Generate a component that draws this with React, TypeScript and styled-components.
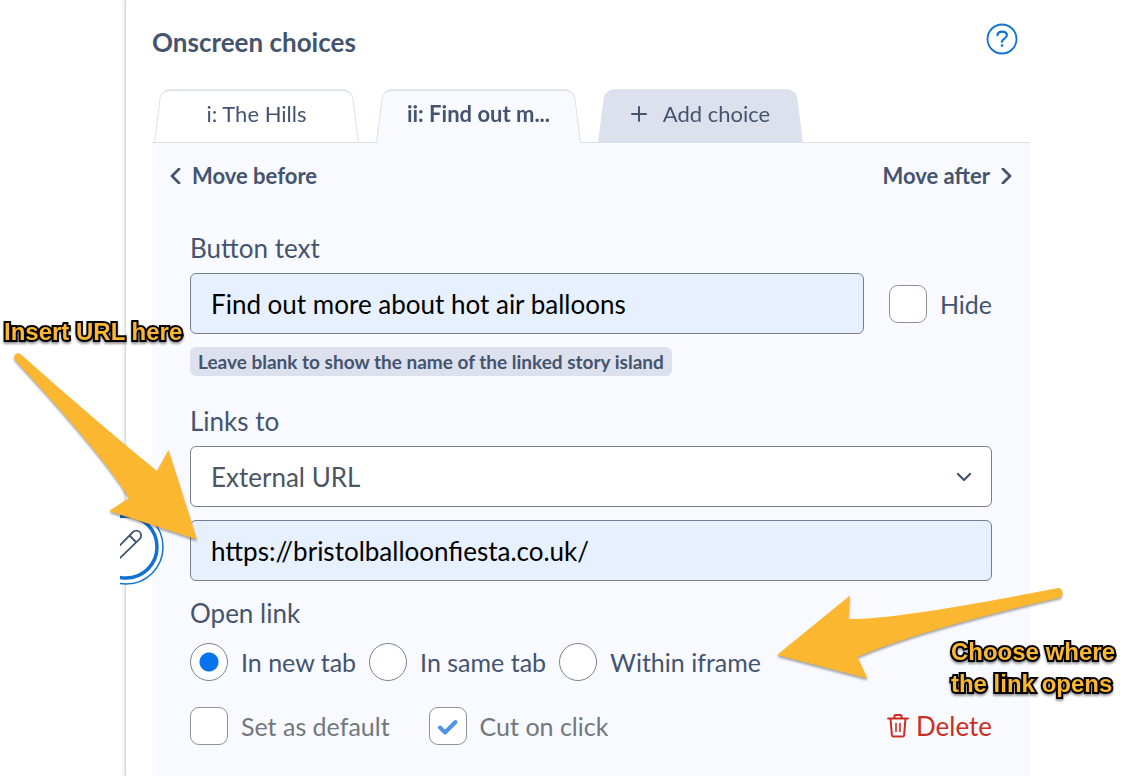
import React, { useState } from "react";
import styled, { createGlobalStyle, css } from "styled-components";

const ink = "#44546f";
const line = "#dcdfe4";
const field = "#e7f0fe";
const surface = "#f8faff";
const tint = "#dce1ed";
const outline = "#75808f";
const blue = "#1272d3";
const amber = "#fcb730";

const GlobalStyle = createGlobalStyle`
  *, *::before, *::after { box-sizing: border-box; }
  body {
    margin: 0;
    background: #fff;
    color: ${ink};
    font-family: Lato, "Liberation Sans", sans-serif;
  }
  button, input, select { font: inherit; color: inherit; margin: 0; }
`;

const Page = styled.div`
  position: relative;
  display: flex;
  min-height: 100vh;
  overflow: hidden;
`;

const Gutter = styled.div`
  flex: 0 0 125px;
`;

const Main = styled.main`
  flex: 1;
  min-width: 0;
  display: flex;
  flex-direction: column;
  padding: 0 96px 0 26px;
  border-left: 1px solid #d8d8d8;
  box-shadow: 0 0 4px rgba(0, 0, 0, 0.2);
  background: #fff;
`;

const Header = styled.header`
  display: flex;
  justify-content: space-between;
  align-items: center;
  height: 88px;
  padding: 0 12px 10px 0;
`;

const Title = styled.h1`
  margin: 6px 0 0;
  font-size: 26px;
  line-height: 32px;
  font-weight: 700;
`;

const plainButton = css`
  border: 0;
  padding: 0;
  background: none;
  cursor: pointer;
`;

const HelpButton = styled.button`
  ${plainButton}
  display: flex;
`;

const Tabs = styled.div`
  position: relative;
  z-index: 1;
  display: flex;
  gap: 17px;
  padding: 0 2px;
`;

const Tab = styled.button<{ $fill: string; $active?: boolean; $edge?: string }>`
  ${plainButton}
  position: relative;
  z-index: 0;
  flex: 0 0 205px;
  display: flex;
  justify-content: center;
  align-items: center;
  gap: 16px;
  height: 55px;
  padding-bottom: 3px;
  font-size: 22px;
  line-height: 32px;
  font-weight: ${(p) => (p.$active ? 700 : 400)};

  &::before {
    content: "";
    position: absolute;
    z-index: -1;
    inset: -3px 0 0;
    background: ${(p) => p.$fill};
    border: 1px solid ${(p) => p.$edge ?? line};
    border-top-width: 2px;
    border-bottom-width: ${(p) => (p.$active ? 0 : 1)}px;
    border-radius: 10px 10px 0 0;
    transform: perspective(100px) rotateX(7deg);
    transform-origin: bottom;
  }
`;

const Panel = styled.section`
  flex: 1;
  margin-top: -1px;
  padding: 0 0 30px;
  border-top: 1px solid ${line};
  background: ${surface};
`;

const MoveRow = styled.div`
  display: flex;
  justify-content: space-between;
  padding: 17px 17px 0;
`;

const MoveButton = styled.button`
  ${plainButton}
  display: flex;
  align-items: center;
  gap: 10px;
  font-size: 22px;
  line-height: 32px;
  font-weight: 700;
`;

const Form = styled.form`
  display: flex;
  flex-direction: column;
  padding: 38px 38px 0;
  font-size: 26px;
  line-height: 36px;
`;

const Label = styled.label`
  display: block;
  margin-bottom: 7px;
`;

const Row = styled.div`
  display: flex;
  align-items: center;
  gap: 25px;
`;

const TextInput = styled.input`
  width: 100%;
  min-width: 0;
  height: 61px;
  padding: 0 20px;
  border: 1px solid ${outline};
  border-radius: 6px;
  background: ${field};
  color: #000;
`;

const Hint = styled.p`
  align-self: flex-start;
  margin: 13px 0 27px;
  padding: 0 8px;
  border-radius: 6px;
  background: ${tint};
  font-size: 19px;
  line-height: 29px;
  font-weight: 700;
`;

const SelectWrap = styled.div`
  position: relative;
  margin-bottom: 13px;
  color: #4c5561;

  svg {
    position: absolute;
    right: 20px;
    top: 26px;
    pointer-events: none;
  }
`;

const Select = styled.select`
  display: block;
  width: 100%;
  height: 61px;
  padding: 0 20px;
  appearance: none;
  border: 1px solid ${outline};
  border-radius: 6px;
  background: #fff;
`;

const Fieldset = styled.fieldset`
  margin: 14px 0 0;
  padding: 0;
  border: 0;
`;

const Legend = styled.legend`
  padding: 0;
  margin-bottom: 12px;
`;

const Options = styled.div`
  display: flex;
  align-items: center;
  gap: 13px;
`;

const Option = styled.label<{ $muted?: boolean }>`
  display: flex;
  align-items: center;
  gap: 13px;
  color: ${(p) => (p.$muted ? "#72777e" : ink)};
  font-size: 25px;
  white-space: nowrap;
`;

const Box = styled.span`
  position: relative;
  display: flex;

  svg {
    position: absolute;
    left: 8px;
    top: 12px;
    pointer-events: none;
  }
`;

const Check = styled.input`
  appearance: none;
  width: 38px;
  height: 38px;
  border: 1px solid #8d929b;
  border-radius: 9px;
  background: #fff;
`;

const Radio = styled.input`
  appearance: none;
  width: 38px;
  height: 38px;
  border: 1px solid #7d828b;
  border-radius: 50%;
  background: #fff;

  &:checked {
    background: radial-gradient(circle, #0674ee 9px, #fff 10px);
  }
`;

const Footer = styled.div`
  display: flex;
  align-items: center;
  gap: 39px;
  margin-top: 26px;
`;

const DeleteButton = styled.button`
  ${plainButton}
  display: flex;
  align-items: center;
  gap: 7px;
  margin-left: auto;
  color: #cc2d24;
`;

const EditBadge = styled.button`
  ${plainButton}
  position: absolute;
  left: 120px;
  top: 510px;
  display: flex;
`;

const Arrow = styled.svg`
  position: absolute;
  pointer-events: none;
  filter: drop-shadow(0 2px 1px rgba(0, 0, 0, 0.35));
`;

const LeftArrow = styled(Arrow)`
  left: 0;
  top: 340px;
`;

const RightArrow = styled(Arrow)`
  right: 56px;
  top: 580px;
`;

const Note = styled.p`
  position: absolute;
  margin: 0;
  color: ${amber};
  font-family: "Liberation Sans", Arial, sans-serif;
  font-size: 24px;
  line-height: 32px;
  font-weight: 700;
  white-space: nowrap;
  -webkit-text-stroke: 4px #000;
  paint-order: stroke fill;
  filter: drop-shadow(0 2px 1px rgba(0, 0, 0, 0.4));
`;

const LeftNote = styled(Note)`
  left: 4px;
  top: 316px;
`;

const RightNote = styled(Note)`
  right: 11px;
  top: 636px;
`;

const HelpIcon = () => (
  <svg width="32" height="32" viewBox="0 0 32 32" fill="none" stroke={blue} strokeLinecap="round">
    <circle cx="16" cy="16" r="14.5" strokeWidth="1.8" />
    <path d="M11.4 12.2c.3-2.4 2-3.6 4.6-3.6 2.900 0 4.900 1.400 4.900 3.700 0 3.400-4.900 3.300-4.900 6.500" strokeWidth="2.200" />
    <circle cx="16" cy="22.600" r="0.600" fill={blue} strokeWidth="1.400" />
  </svg>
);

const Chevron = ({ d, w, h, weight = 2.8 }: { d: string; w: number; h: number; weight?: number }) => (
  <svg width={w} height={h} viewBox={`0 0 ${w} ${h}`} fill="none" stroke={ink} strokeWidth={weight} strokeLinecap="round" strokeLinejoin="round">
    <path d={d} />
  </svg>
);

const PlusIcon = () => (
  <svg width="16" height="16" viewBox="0 0 16 16" stroke={ink} strokeWidth="2" strokeLinecap="round">
    <path d="M8 1v14M1 8h14" />
  </svg>
);

const TrashIcon = () => (
  <svg width="22" height="24" viewBox="0 0 22 24" fill="none" stroke="#cc2d24" strokeWidth="2" strokeLinecap="round" strokeLinejoin="round">
    <path d="M1 4.500h20M3.500 4.500l1.400 16.700a1.500 1.500 0 0 0 1.500 1.300h9.200a1.500 1.500 0 0 0 1.500-1.300L18.500 4.500" />
    <path d="M7.500 4V2a1 1 0 0 1 1-1h5a1 1 0 0 1 1 1v2" />
    <path d="M9 9.500v8M13 9.500v8" strokeWidth="1.600" />
  </svg>
);

const PencilBadge = () => (
  <svg width="46" height="76" viewBox="120 510 46 76" fill="none">
    <circle cx="126" cy="547" r="37" fill="#fff" stroke={blue} strokeWidth="1.500" />
    <circle cx="126" cy="547" r="31" stroke={blue} strokeWidth="3.500" />
    <g stroke={ink} strokeWidth="1.800" strokeLinejoin="round">
      <path d="M112 553.500l21-21.500a4.600 4.600 0 0 1 3.300-1.300c2.700 0 4.800 2.100 4.800 4.800a4.600 4.600 0 0 1-1.300 3.300L118 560" />
      <path d="M129.500 535.500l6.500 6.500" />
    </g>
  </svg>
);

export default function App() {
  const [text, setText] = useState("Find out more about hot air balloons");
  const [url, setUrl] = useState("https://bristolballoonfiesta.co.uk/");
  const [target, setTarget] = useState("In new tab");
  return (
    <Page>
      <GlobalStyle />
      <Gutter />
      <Main>
        <Header>
          <Title>Onscreen choices</Title>
          <HelpButton type="button" aria-label="Help">
            <HelpIcon />
          </HelpButton>
        </Header>
        <Tabs role="tablist">
          <Tab role="tab" $fill="#fff">i: The Hills</Tab>
          <Tab role="tab" aria-selected $active $fill={surface}>ii: Find out m...</Tab>
          <Tab $fill={tint} $edge={tint}>
            <PlusIcon />
            Add choice
          </Tab>
        </Tabs>
        <Panel>
          <MoveRow>
            <MoveButton type="button">
              <Chevron w={13} h={16} d="M10 1L3 8l7 7" />
              Move before
            </MoveButton>
            <MoveButton type="button">
              Move after
              <Chevron w={13} h={16} d="M3 1l7 7-7 7" />
            </MoveButton>
          </MoveRow>
          <Form>
            <Label htmlFor="button-text">Button text</Label>
            <Row>
              <TextInput id="button-text" value={text} onChange={(e) => setText(e.target.value)} />
              <Option>
                <Check type="checkbox" />
                Hide
              </Option>
            </Row>
            <Hint>Leave blank to show the name of the linked story island</Hint>
            <Label htmlFor="links-to">Links to</Label>
            <SelectWrap>
              <Select id="links-to">
                <option>External URL</option>
              </Select>
              <Chevron w={16} h={11} d="M2 2l6 6 6-6" weight={2.2} />
            </SelectWrap>
            <TextInput type="text" aria-label="URL" value={url} onChange={(e) => setUrl(e.target.value)} />
            <Fieldset>
              <Legend>Open link</Legend>
              <Options>
                {["In new tab", "In same tab", "Within iframe"].map((name) => (
                  <Option key={name}>
                    <Radio type="radio" name="target" checked={target === name} onChange={() => setTarget(name)} />
                    {name}
                  </Option>
                ))}
              </Options>
            </Fieldset>
            <Footer>
              <Option $muted>
                <Check type="checkbox" disabled />
                Set as default
              </Option>
              <Option $muted>
                <Box>
                  <Check type="checkbox" checked disabled readOnly />
                  <svg width="22" height="17" viewBox="0 0 22 17" fill="none" stroke="#4f93e8" strokeWidth="4" strokeLinecap="round" strokeLinejoin="round">
                    <path d="M3 8.500l5 5L18.500 3" />
                  </svg>
                </Box>
                Cut on click
              </Option>
              <DeleteButton type="button">
                <TrashIcon />
                Delete
              </DeleteButton>
            </Footer>
          </Form>
        </Panel>
      </Main>
      <EditBadge type="button" aria-label="Edit">
        <PencilBadge />
      </EditBadge>
      <LeftArrow width="210" height="210" viewBox="0 340 210 210" fill={amber}>
        <path d="M14.500 359.500C13 354.500 17 351.500 21 354.500Q98 423 157 471L168.500 450L197 539.500L109 511L129 498Q102 454 14.500 359.500Z" />
      </LeftArrow>
      <RightArrow width="300" height="110" viewBox="770 580 300 110" fill={amber}>
        <path d="M777 655L850 595.500L848.500 619Q895 620 1058 588C1063 588 1064 595.500 1060 597.500Q920 630 857.500 657L867.500 678.500Z" />
      </RightArrow>
      <LeftNote>Insert URL here</LeftNote>
      <RightNote>
        Choose where
        <br />
        the link opens
      </RightNote>
    </Page>
  );
}
